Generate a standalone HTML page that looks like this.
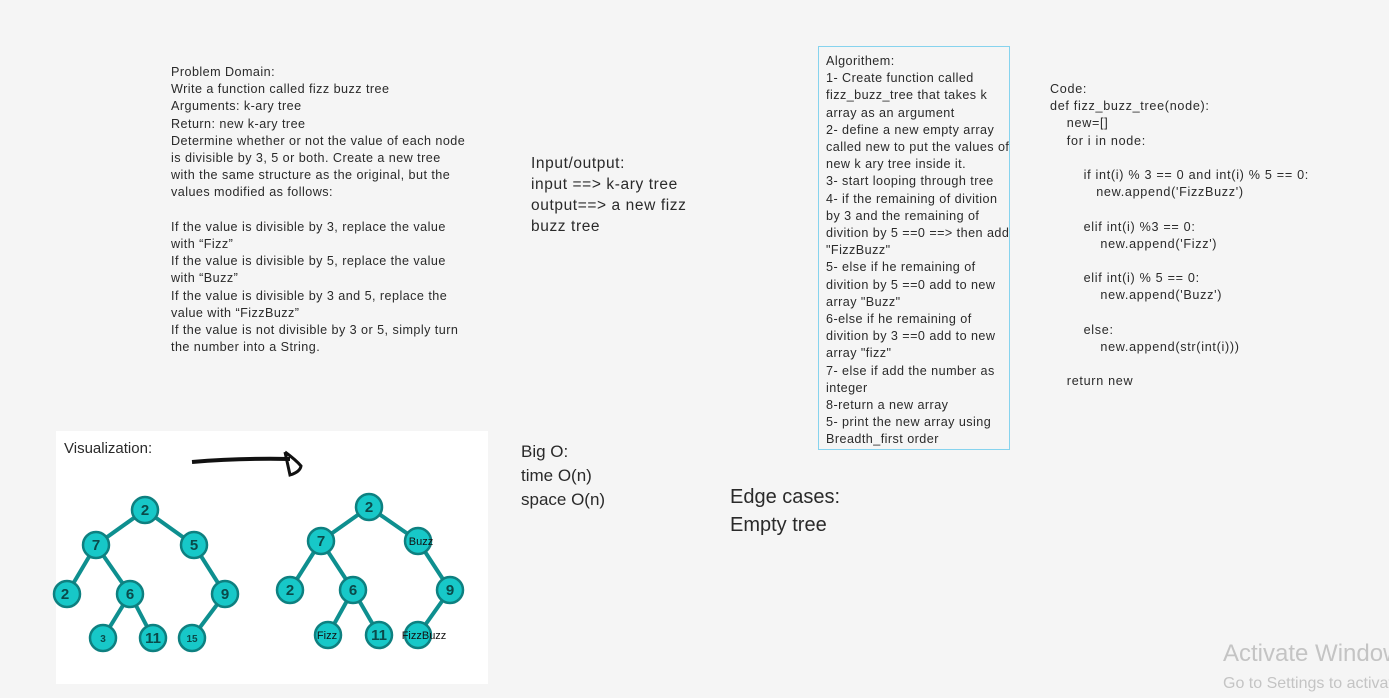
<!DOCTYPE html>
<html><head><meta charset="utf-8"><style>
html,body{margin:0;padding:0;}
body{width:1389px;height:698px;background:#f5f5f5;position:relative;overflow:hidden;font-family:"Liberation Sans",sans-serif;color:#2a2a2a;}
.t{position:absolute;font-size:12.6px;line-height:17.2px;white-space:pre;letter-spacing:0.45px;}
.big{position:absolute;white-space:pre;}
</style></head><body>
<div class="t" style="left:171px;top:64px;">Problem Domain:
Write a function called fizz buzz tree
Arguments: k-ary tree
Return: new k-ary tree
Determine whether or not the value of each node
is divisible by 3, 5 or both. Create a new tree
with the same structure as the original, but the
values modified as follows:

If the value is divisible by 3, replace the value
with “Fizz”
If the value is divisible by 5, replace the value
with “Buzz”
If the value is divisible by 3 and 5, replace the
value with “FizzBuzz”
If the value is not divisible by 3 or 5, simply turn
the number into a String.</div>

<div class="big" style="left:531px;top:153px;font-size:15.5px;line-height:21px;letter-spacing:0.6px;">Input/output:
input ==> k-ary tree
output==> a new fizz
buzz tree</div>

<div style="position:absolute;left:818px;top:46px;width:190px;height:402px;border:1px solid #86d3ee;"></div>
<div class="t" style="left:826px;top:53px;">Algorithem:
1- Create function called
fizz_buzz_tree that takes k
array as an argument
2- define a new empty array
called new to put the values of
new k ary tree inside it.
3- start looping through tree
4- if the remaining of divition
by 3 and the remaining of
divition by 5 ==0 ==> then add
"FizzBuzz"
5- else if he remaining of
divition by 5 ==0 add to new
array "Buzz"
6-else if he remaining of
divition by 3 ==0 add to new
array "fizz"
7- else if add the number as
integer
8-return a new array
5- print the new array using
Breadth_first order</div>

<div class="t" style="left:1050px;top:81px;letter-spacing:0.7px;">Code:
def fizz_buzz_tree(node):
    new=[]
    for i in node:

        if int(i) % 3 == 0 and int(i) % 5 == 0:
           new.append('FizzBuzz')

        elif int(i) %3 == 0:
            new.append('Fizz')

        elif int(i) % 5 == 0:
            new.append('Buzz')

        else:
            new.append(str(int(i)))

    return new</div>

<div class="big" style="left:521px;top:440px;font-size:17px;line-height:24px;">Big O:
time O(n)
space O(n)</div>
<div class="big" style="left:730px;top:483px;font-size:20px;line-height:28px;">Edge cases:
Empty tree</div>

<div style="position:absolute;left:56px;top:431px;width:432px;height:253px;background:#fff;"></div>
<div class="big" style="left:64px;top:440px;font-size:15px;">Visualization:</div>
<svg style="position:absolute;left:0;top:0" width="1389" height="698">
<path d="M192 462 Q240 458 290 459" stroke="#111" stroke-width="4" fill="none"/>
<path d="M285 452 L290 475 Q300 472 301 466 Q296 460 285 452" stroke="#111" stroke-width="3" fill="none"/>
<g stroke="#0e8f8f" stroke-width="4">
<line x1="145" y1="510" x2="96" y2="545"/><line x1="145" y1="510" x2="194" y2="545"/>
<line x1="96" y1="545" x2="67" y2="594"/><line x1="96" y1="545" x2="130" y2="594"/>
<line x1="194" y1="545" x2="225" y2="594"/><line x1="130" y1="594" x2="103" y2="638"/>
<line x1="130" y1="594" x2="153" y2="638"/><line x1="225" y1="594" x2="192" y2="638"/>
<line x1="369" y1="507" x2="321" y2="541"/><line x1="369" y1="507" x2="418" y2="541"/>
<line x1="321" y1="541" x2="290" y2="590"/><line x1="321" y1="541" x2="353" y2="590"/>
<line x1="418" y1="541" x2="450" y2="590"/><line x1="353" y1="590" x2="328" y2="635"/>
<line x1="353" y1="590" x2="379" y2="635"/><line x1="450" y1="590" x2="418" y2="635"/>
</g>
<g fill="#17c8c8" stroke="#0e8080" stroke-width="2.5">
<circle cx="145" cy="510" r="13"/><circle cx="96" cy="545" r="13"/><circle cx="194" cy="545" r="13"/>
<circle cx="67" cy="594" r="13"/><circle cx="130" cy="594" r="13"/><circle cx="225" cy="594" r="13"/>
<circle cx="103" cy="638" r="13"/><circle cx="153" cy="638" r="13"/><circle cx="192" cy="638" r="13"/>
<circle cx="369" cy="507" r="13"/><circle cx="321" cy="541" r="13"/><circle cx="418" cy="541" r="13"/>
<circle cx="290" cy="590" r="13"/><circle cx="353" cy="590" r="13"/><circle cx="450" cy="590" r="13"/>
<circle cx="328" cy="635" r="13"/><circle cx="379" cy="635" r="13"/><circle cx="418" cy="635" r="13"/>
</g>
<g font-family="Liberation Sans, sans-serif" font-size="15" font-weight="bold" fill="#0a4a4a" text-anchor="middle">
<text x="145" y="515">2</text><text x="96" y="550">7</text><text x="194" y="550">5</text>
<text x="65" y="599">2</text><text x="130" y="599">6</text><text x="225" y="599">9</text>
<text x="103" y="642" font-size="10">3</text><text x="153" y="643">11</text><text x="192" y="642" font-size="10">15</text>
<text x="369" y="512">2</text><text x="321" y="546">7</text><text x="290" y="595">2</text>
<text x="353" y="595">6</text><text x="450" y="595">9</text><text x="379" y="640">11</text>
</g>
<g font-family="Liberation Sans, sans-serif" font-size="11" fill="#111" text-anchor="middle">
<text x="421" y="545">Buzz</text><text x="327" y="639">Fizz</text><text x="424" y="639">FizzBuzz</text>
</g>
</svg>

<div style="position:absolute;left:1223px;top:630px;width:166px;height:68px;overflow:hidden;">
<div class="big" style="left:0;top:10px;font-size:24px;color:#c4c4c4;">Activate Windows</div>
<div class="big" style="left:0;top:45px;font-size:16px;color:#c4c4c4;">Go to Settings to activate Windows.</div>
</div>
</body></html>
